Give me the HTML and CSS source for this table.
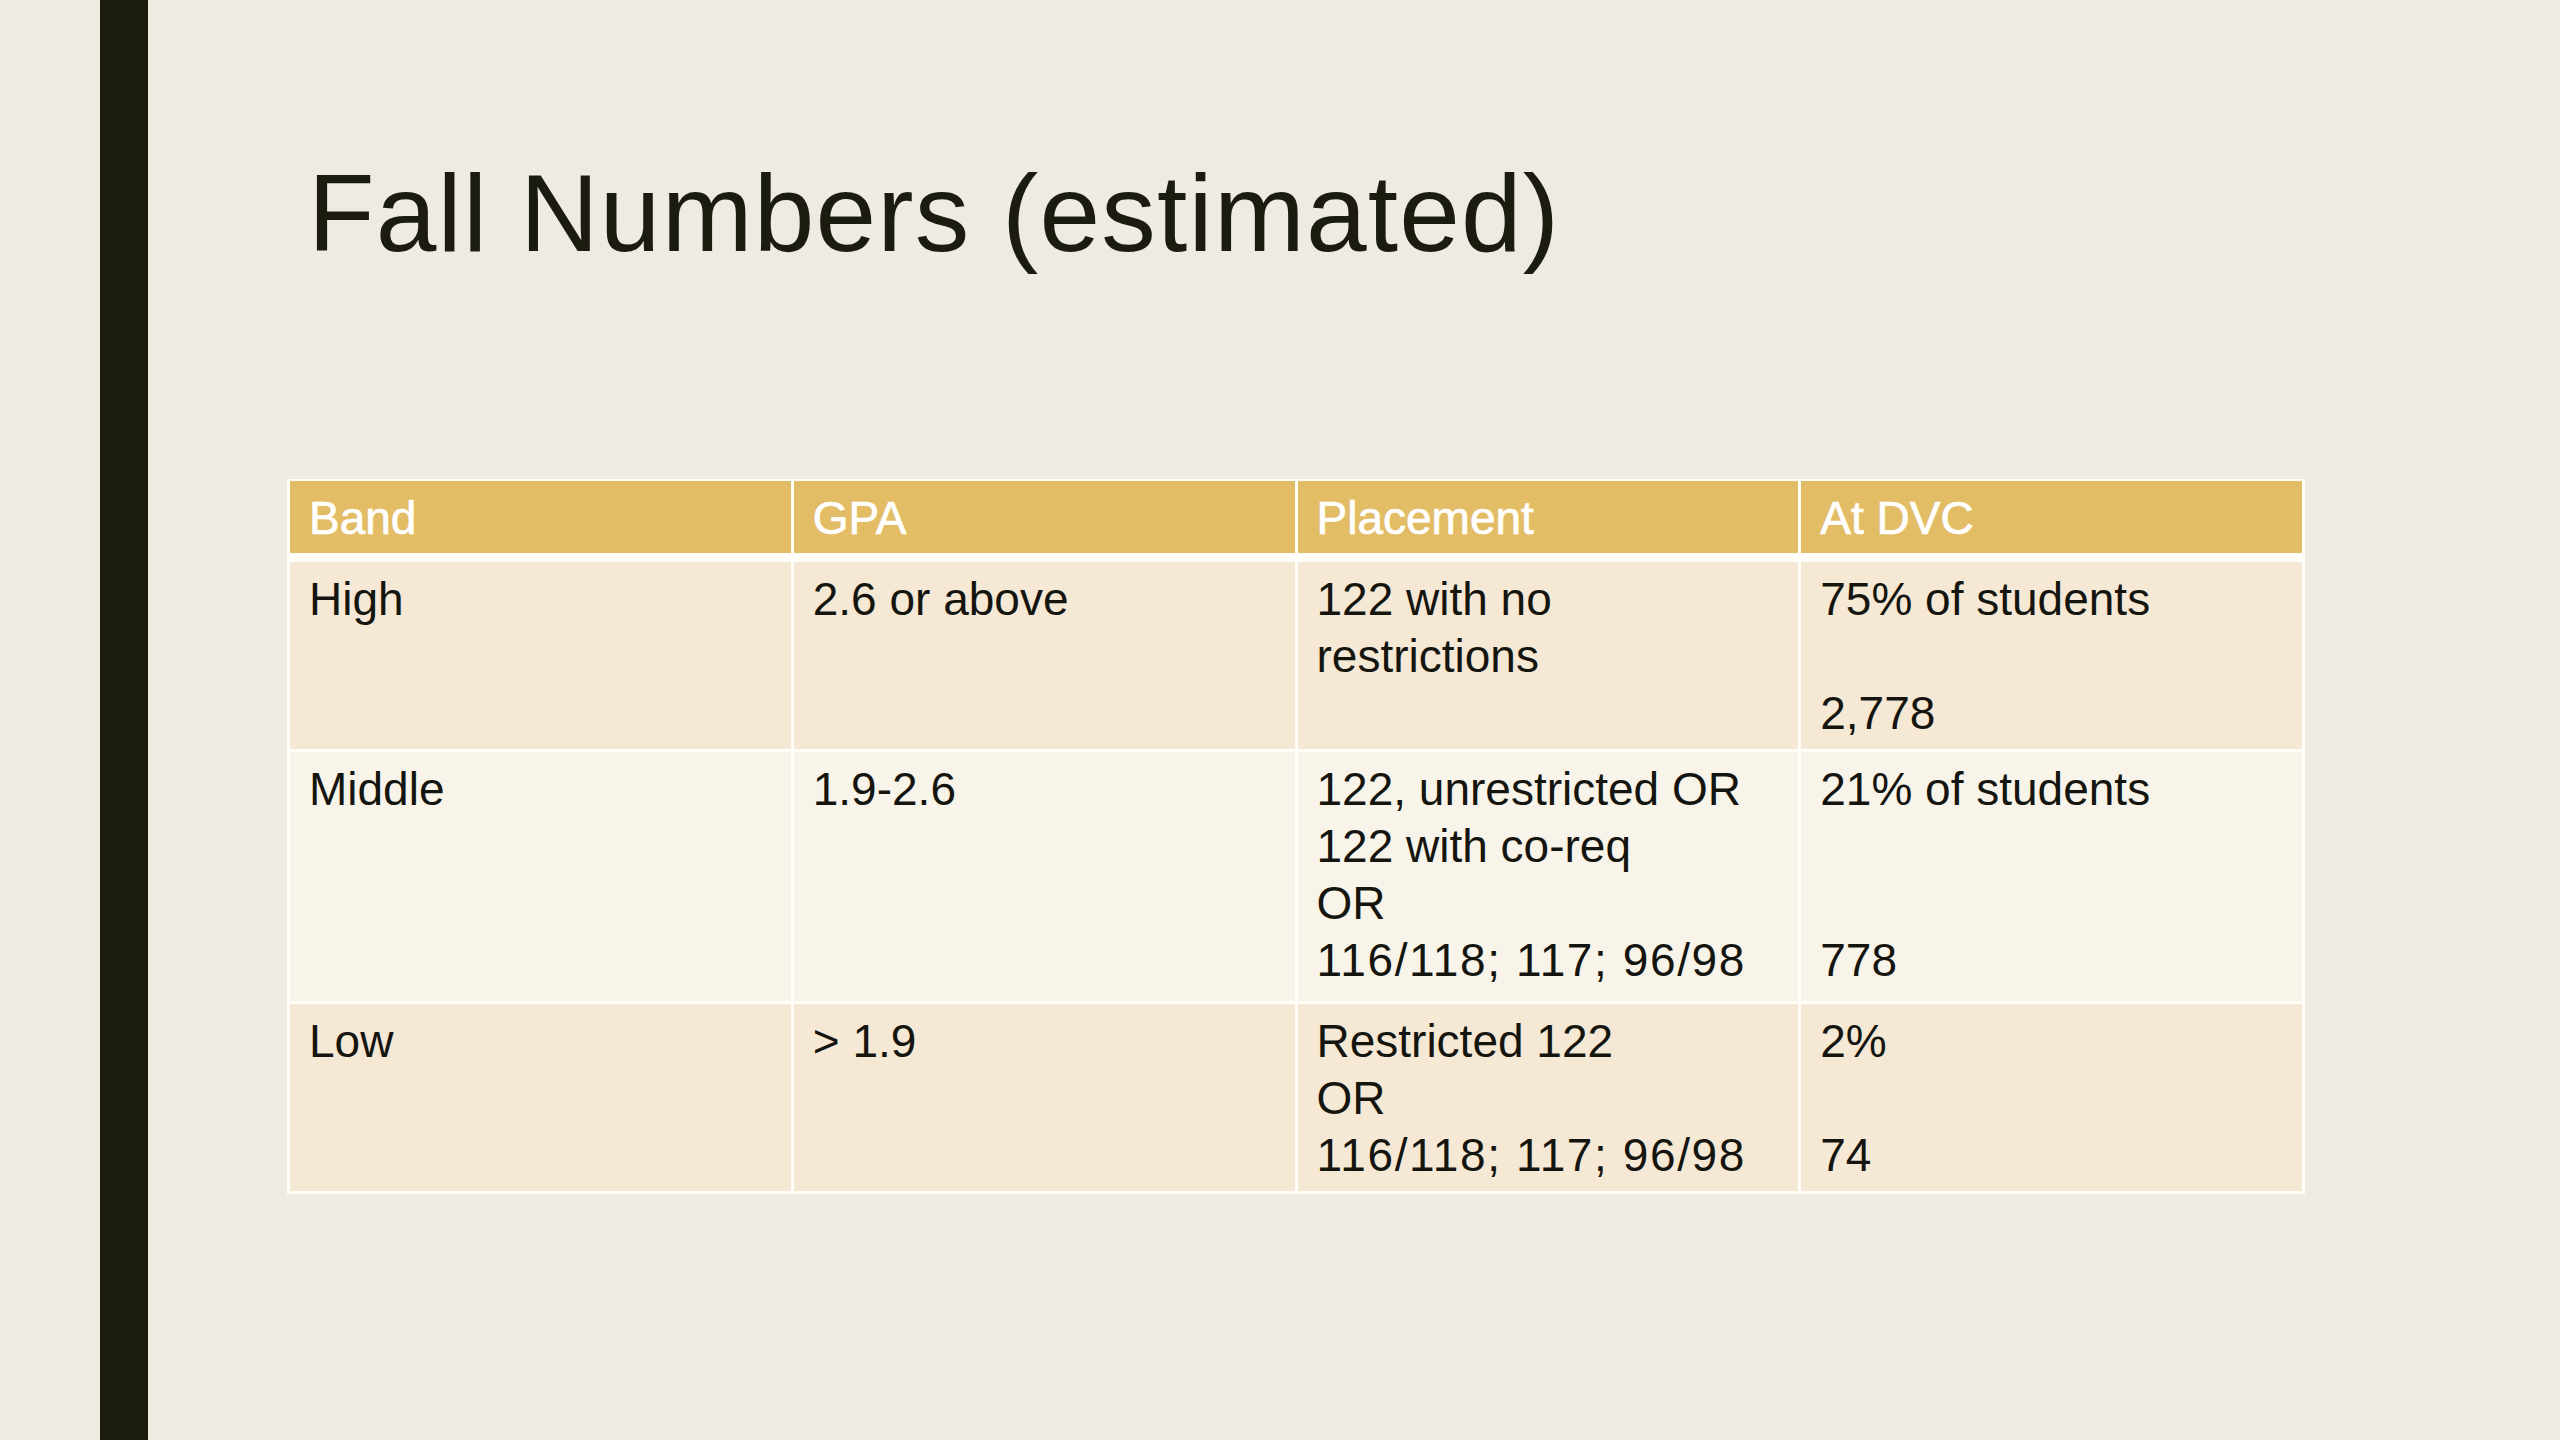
FILE: index.html
```html
<!DOCTYPE html>
<html lang="en">
<head>
<meta charset="utf-8">
<title>Fall Numbers (estimated)</title>
<link rel="stylesheet" href="styles.css">
</head>
<body>
<div class="slide">
  <div class="bar"></div>
  <main class="content">
    <h1 class="title">Fall Numbers (estimated)</h1>
    <div class="table">
      <div class="cell head">Band</div>
      <div class="cell head">GPA</div>
      <div class="cell head">Placement</div>
      <div class="cell head">At DVC</div>

      <div class="cell odd">High</div>
      <div class="cell odd">2.6 or above</div>
      <div class="cell odd">122 with no<br>restrictions</div>
      <div class="cell odd">75% of students<br><br>2,778</div>

      <div class="cell even">Middle</div>
      <div class="cell even">1.9-2.6</div>
      <div class="cell even">122, unrestricted OR<br>122 with co-req<br>OR<br><span class="nums">116/118; 117; 96/98</span></div>
      <div class="cell even">21% of students<br><br><br>778</div>

      <div class="cell odd">Low</div>
      <div class="cell odd">&gt; 1.9</div>
      <div class="cell odd">Restricted 122<br>OR<br><span class="nums">116/118; 117; 96/98</span></div>
      <div class="cell odd">2%<br><br>74</div>
    </div>
  </main>
</div>
</body>
</html>
```
FILE: styles.css
```css
html, body {
  margin: 0;
  padding: 0;
}

body {
  background: #EEEBE3;
  font-family: "Liberation Sans", Arial, sans-serif;
  color: #151510;
}

.slide {
  display: flex;
  width: 2560px;
  height: 1440px;
  overflow: hidden;
}

.bar {
  flex: none;
  width: 48px;
  margin-left: 100px;
  background: #1C1C0F;
}

.content {
  flex: 1;
  padding-left: 139px;
}

.title {
  margin: 153px 0 0 0;
  padding-left: 21px;
  font-size: 109px;
  line-height: 120px;
  font-weight: normal;
  color: #1B1B10;
  letter-spacing: 1.2px;
}

.table {
  margin-top: 206px;
  width: 2018px;
  box-sizing: border-box;
  display: grid;
  grid-template-columns: repeat(4, 1fr);
  gap: 3px;
  padding: 2px 3px 3px 3px;
  background: #FFFDF8;
}

.cell {
  box-sizing: border-box;
  padding: 9px 19px 7px 19px;
  font-size: 46px;
  line-height: 57px;
}

.nums {
  letter-spacing: 1.6px;
}

.head {
  height: 72px;
  margin-bottom: 6px;
  background: #E3BD66;
  color: #FFFFFF;
  -webkit-text-stroke: 0.7px #FFFFFF;
}

.odd {
  background: #F5E8D4;
}

.even {
  background: #F8F4EA;
  padding-bottom: 12px;
}
```
